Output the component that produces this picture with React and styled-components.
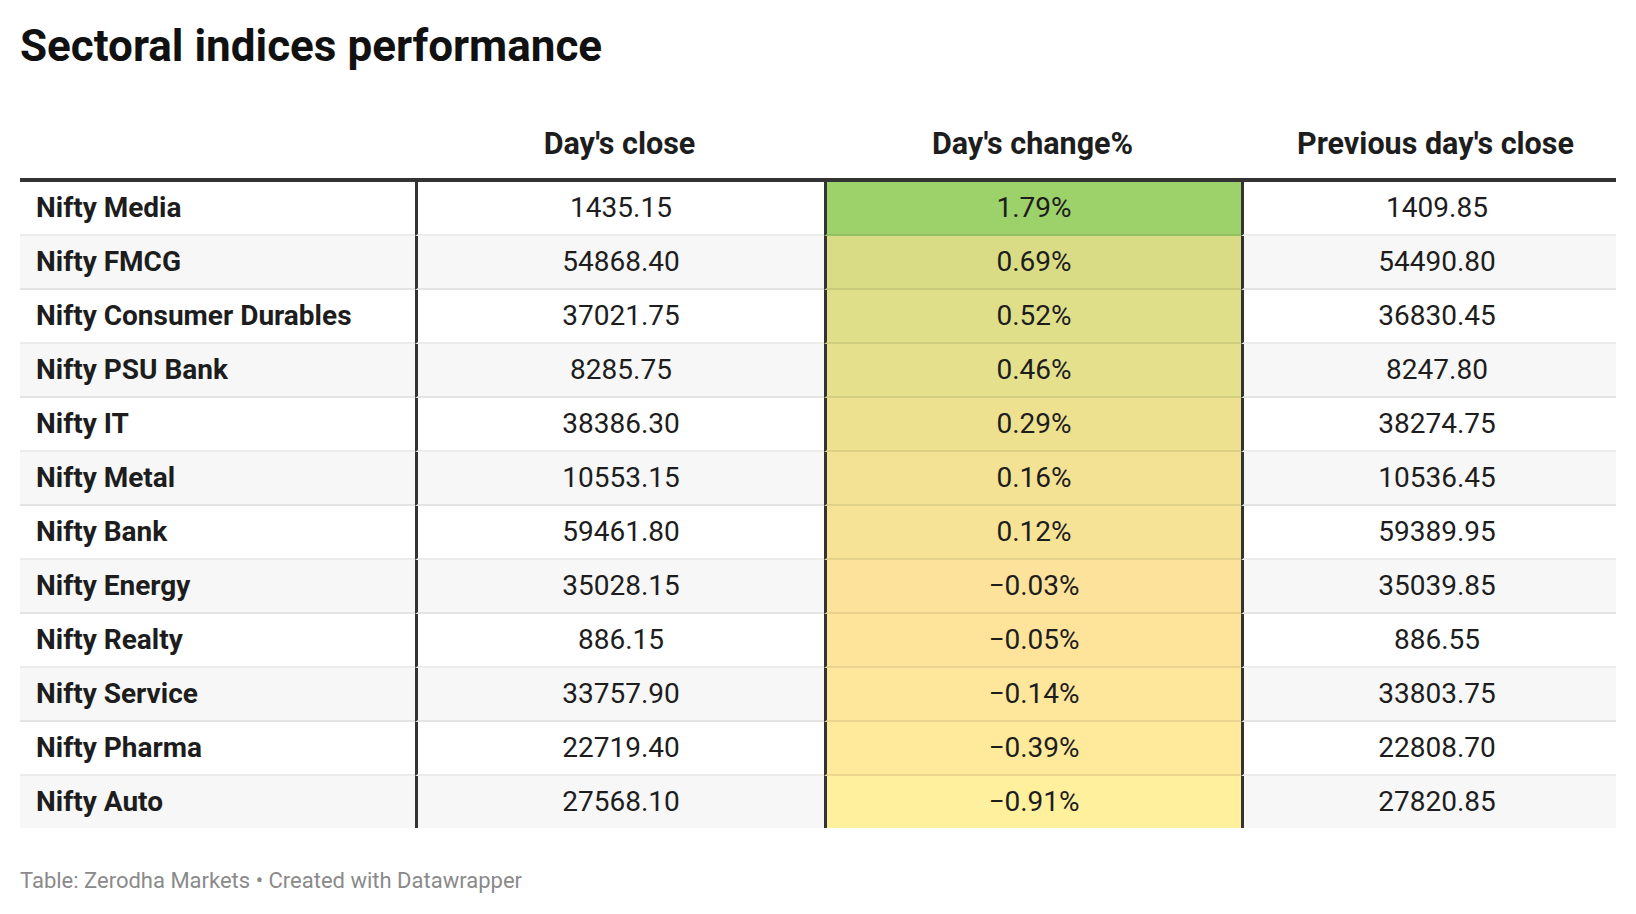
import React from "react";
import styled, { createGlobalStyle } from "styled-components";

const GlobalStyle = createGlobalStyle`
  html, body {
    margin: 0;
    padding: 0;
    background: #ffffff;
  }
  body {
    font-family: Roboto, "Liberation Sans", Arial, sans-serif;
    color: #1d1d1d;
  }
`;

const rows = [
  { name: "Nifty Media", close: "1435.15", change: "1.79%", prev: "1409.85", color: "#9dd169" },
  { name: "Nifty FMCG", close: "54868.40", change: "0.69%", prev: "54490.80", color: "#d9dc84" },
  { name: "Nifty Consumer Durables", close: "37021.75", change: "0.52%", prev: "36830.45", color: "#e0df89" },
  { name: "Nifty PSU Bank", close: "8285.75", change: "0.46%", prev: "8247.80", color: "#e4e08c" },
  { name: "Nifty IT", close: "38386.30", change: "0.29%", prev: "38274.75", color: "#ede190" },
  { name: "Nifty Metal", close: "10553.15", change: "0.16%", prev: "10536.45", color: "#f3e293" },
  { name: "Nifty Bank", close: "59461.80", change: "0.12%", prev: "59389.95", color: "#f6e396" },
  { name: "Nifty Energy", close: "35028.15", change: "\u22120.03%", prev: "35039.85", color: "#fde29b" },
  { name: "Nifty Realty", close: "886.15", change: "\u22120.05%", prev: "886.55", color: "#fee49b" },
  { name: "Nifty Service", close: "33757.90", change: "\u22120.14%", prev: "33803.75", color: "#fee69b" },
  { name: "Nifty Pharma", close: "22719.40", change: "\u22120.39%", prev: "22808.70", color: "#ffe99b" },
  { name: "Nifty Auto", close: "27568.10", change: "\u22120.91%", prev: "27820.85", color: "#fff09e" },
];

const Page = styled.div`
  padding: 20px 20px 0 20px;
`;

const Title = styled.h1`
  margin: 0;
  font-size: 44px;
  font-weight: 700;
  line-height: normal;
  color: #111111;
`;

const Table = styled.div`
  width: 1596px;
  display: flex;
  flex-direction: column;
`;

const Row = styled.div`
  display: grid;
  grid-template-columns: 395px 409px 417px 1fr;
  background: ${(p) => (p.$striped ? "#f7f7f7" : "#ffffff")};
`;

const HeaderRow = styled(Row)`
  padding-top: 54px;
  border-bottom: 4px solid #333333;
`;

const HeadCell = styled.div`
  font-size: 30.5px;
  font-weight: 700;
  line-height: normal;
  text-align: center;
  padding: 0 0 17px ${(p) => (p.$shift ? "14px" : "0")};
`;

const Cell = styled.div`
  height: 51px;
  display: flex;
  align-items: center;
  justify-content: ${(p) => (p.$left ? "flex-start" : "center")};
  padding-left: ${(p) => (p.$left ? "16px" : p.$shift ? "14px" : "0")};
  padding-bottom: 1px;
  font-size: 28px;
  font-weight: ${(p) => (p.$left ? 700 : 400)};
  color: #1d1d1d;
  background: ${(p) => p.$bg || "transparent"};
  border-left: ${(p) => (p.$rule ? "3px solid #333333" : "none")};
  border-bottom: ${(p) => (p.$last ? "none" : "2px solid rgba(0, 0, 0, 0.075)")};
  white-space: nowrap;
`;

const Footer = styled.div`
  margin-top: 40px;
  font-size: 22px;
  line-height: normal;
  color: #8a8a8a;
`;

export default function App() {
  return (
    <>
      <GlobalStyle />
      <Page>
        <Title>Sectoral indices performance</Title>
        <Table>
          <HeaderRow>
            <HeadCell />
            <HeadCell>Day's close</HeadCell>
            <HeadCell>Day's change%</HeadCell>
            <HeadCell $shift>Previous day's close</HeadCell>
          </HeaderRow>
          {rows.map((r, i) => {
            const last = i === rows.length - 1;
            return (
              <Row key={r.name} $striped={i % 2 === 1}>
                <Cell $left $last={last}>{r.name}</Cell>
                <Cell $rule $last={last}>{r.close}</Cell>
                <Cell $rule $last={last} $bg={r.color}>{r.change}</Cell>
                <Cell $rule $shift $last={last}>{r.prev}</Cell>
              </Row>
            );
          })}
        </Table>
        <Footer>Table: Zerodha Markets • Created with Datawrapper</Footer>
      </Page>
    </>
  );
}
